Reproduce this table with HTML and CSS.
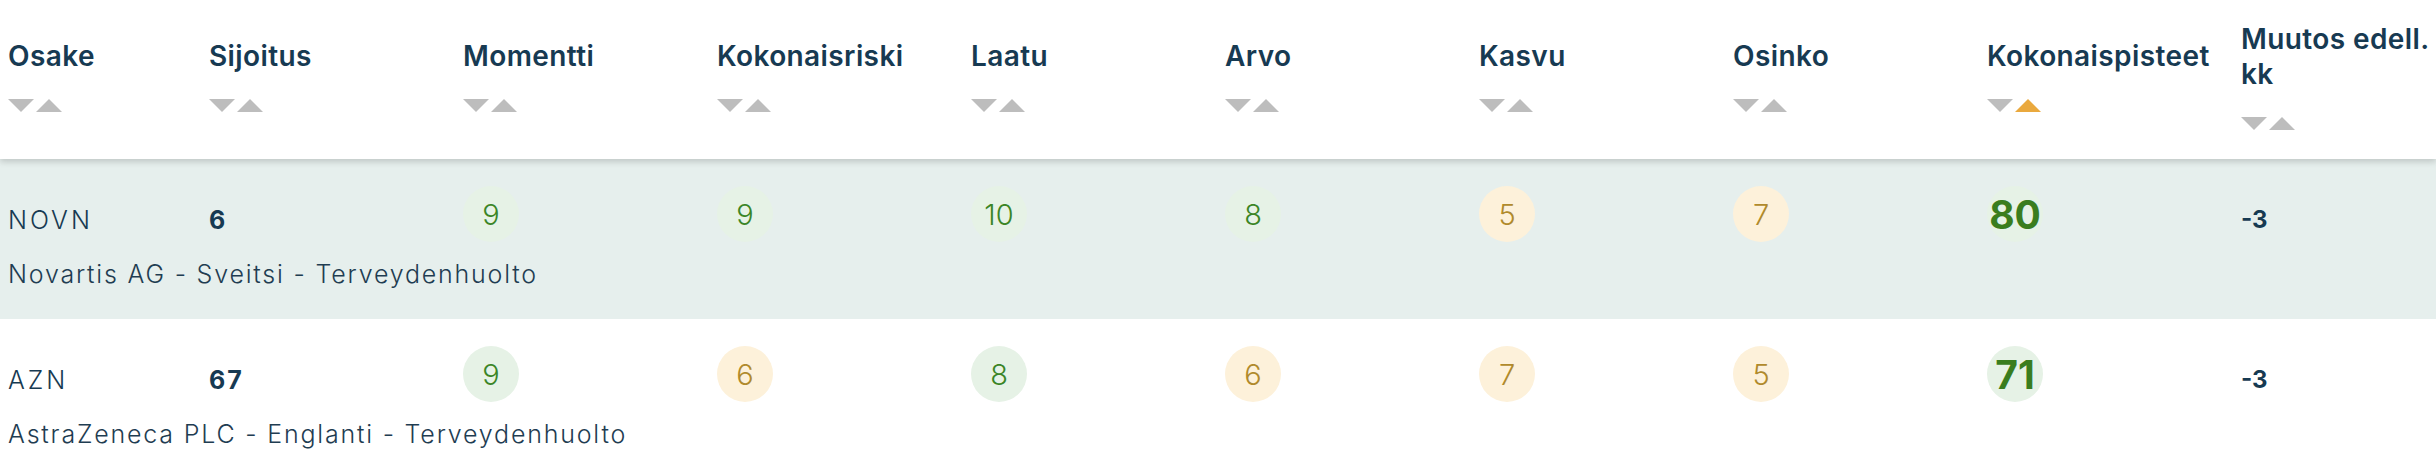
FILE: index.html
```html
<!DOCTYPE html>
<html lang="fi">
<head>
<meta charset="utf-8">
<title>Osakkeet</title>
<link rel="stylesheet" href="styles.css">
</head>
<body>
<div class="table">
  <div class="thead">
    <div class="th"><span class="label">Osake</span><span class="sort"><i class="down"></i><i class="up"></i></span></div>
    <div class="th"><span class="label">Sijoitus</span><span class="sort"><i class="down"></i><i class="up"></i></span></div>
    <div class="th"><span class="label">Momentti</span><span class="sort"><i class="down"></i><i class="up"></i></span></div>
    <div class="th"><span class="label">Kokonaisriski</span><span class="sort"><i class="down"></i><i class="up"></i></span></div>
    <div class="th"><span class="label">Laatu</span><span class="sort"><i class="down"></i><i class="up"></i></span></div>
    <div class="th"><span class="label">Arvo</span><span class="sort"><i class="down"></i><i class="up"></i></span></div>
    <div class="th"><span class="label">Kasvu</span><span class="sort"><i class="down"></i><i class="up"></i></span></div>
    <div class="th"><span class="label">Osinko</span><span class="sort"><i class="down"></i><i class="up"></i></span></div>
    <div class="th"><span class="label">Kokonaispisteet</span><span class="sort"><i class="down"></i><i class="up active"></i></span></div>
    <div class="th"><span class="label">Muutos&nbsp;edell. kk</span><span class="sort"><i class="down"></i><i class="up"></i></span></div>
  </div>

  <div class="row shaded">
    <div class="cells">
      <div class="td ticker">NOVN</div>
      <div class="td strong rank">6</div>
      <div class="td"><span class="score good">9</span></div>
      <div class="td"><span class="score good">9</span></div>
      <div class="td"><span class="score good">10</span></div>
      <div class="td"><span class="score good">8</span></div>
      <div class="td"><span class="score mid">5</span></div>
      <div class="td"><span class="score mid">7</span></div>
      <div class="td"><span class="score good total">80</span></div>
      <div class="td strong">-3</div>
    </div>
    <div class="sub">Novartis AG - Sveitsi - Terveydenhuolto</div>
  </div>

  <div class="row">
    <div class="cells">
      <div class="td ticker">AZN</div>
      <div class="td strong rank">67</div>
      <div class="td"><span class="score good">9</span></div>
      <div class="td"><span class="score mid">6</span></div>
      <div class="td"><span class="score good">8</span></div>
      <div class="td"><span class="score mid">6</span></div>
      <div class="td"><span class="score mid">7</span></div>
      <div class="td"><span class="score mid">5</span></div>
      <div class="td"><span class="score good total">71</span></div>
      <div class="td strong">-3</div>
    </div>
    <div class="sub">AstraZeneca PLC - Englanti - Terveydenhuolto</div>
  </div>
</div>
</body>
</html>
```

FILE: styles.css
```css
html, body {
  margin: 0;
  padding: 0;
  background: #ffffff;
}

body {
  font-family: Inter, "Open Sans", "Liberation Sans", sans-serif;
  color: #173a52;
}

.table {
  width: 100%;
}

.thead,
.cells {
  display: grid;
  grid-template-columns: 201px repeat(8, 254px) 1fr;
  padding: 0 8px;
}

.thead {
  position: relative;
  z-index: 1;
  height: 159px;
  box-sizing: border-box;
  padding-bottom: 8px;
  align-items: center;
  background: #ffffff;
  box-shadow: 0 3px 6px rgba(0, 0, 0, 0.16);
}

.th {
  display: flex;
  flex-direction: column;
  align-items: flex-start;
}

.label {
  font-size: 28px;
  font-weight: 600;
  line-height: 35px;
  letter-spacing: 0.4px;
  color: #173a52;
}

.sort {
  display: flex;
  gap: 2px;
  margin-top: 25px;
}

.sort i {
  display: block;
  width: 0;
  height: 0;
  border-left: 13px solid transparent;
  border-right: 13px solid transparent;
}

.sort .down {
  border-top: 13px solid #bdbdbd;
}

.sort .up {
  border-bottom: 13px solid #bdbdbd;
}

.sort .up.active {
  border-bottom-color: #eaa93e;
}

.row {
  padding: 27px 0 30px;
  background: #ffffff;
}

.row.shaded {
  background: #e6efed;
}

.cells {
  height: 56px;
  align-items: start;
}

.td {
  font-size: 24px;
  line-height: 30px;
  padding-top: 19px;
}

.td:has(.score) {
  padding-top: 0;
}

.ticker {
  font-size: 25px;
  font-weight: 300;
  letter-spacing: 3px;
}

.strong {
  font-weight: 700;
}

.rank {
  font-size: 25px;
  letter-spacing: 2px;
}

.score {
  display: flex;
  align-items: center;
  justify-content: center;
  width: 56px;
  height: 56px;
  border-radius: 50%;
  font-size: 29px;
  font-weight: 300;
  line-height: 1;
}

.score.good {
  background: #e6f2e6;
  color: #3b8526;
}

.score.mid {
  background: #fdf1da;
  color: #b08a2c;
}

.score.total {
  font-size: 39px;
  font-weight: 700;
  color: #3a7d1e;
}

.sub {
  margin-top: 17px;
  padding: 0 8px;
  font-size: 25px;
  font-weight: 300;
  line-height: 30px;
  letter-spacing: 1.8px;
  color: #1f3d52;
}
```
